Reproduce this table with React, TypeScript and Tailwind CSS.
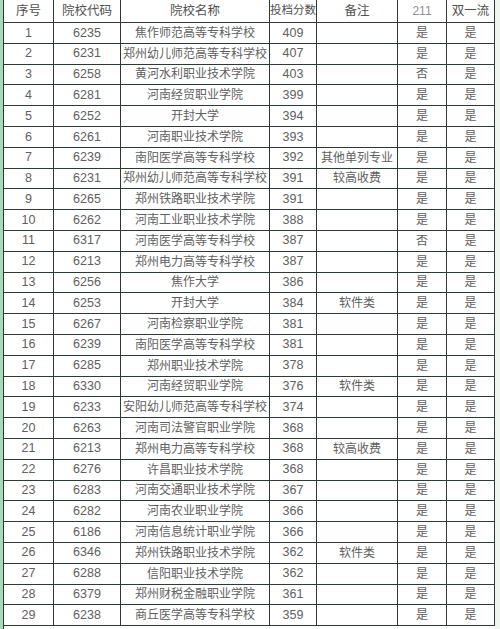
const rows: [string, string, string, string, string, string][] = [
  ["6235", "焦作师范高等专科学校", "409", "", "是", "是"],
  ["6231", "郑州幼儿师范高等专科学校", "407", "", "是", "是"],
  ["6258", "黄河水利职业技术学院", "403", "", "否", "是"],
  ["6281", "河南经贸职业学院", "399", "", "是", "是"],
  ["6252", "开封大学", "394", "", "是", "是"],
  ["6261", "河南职业技术学院", "393", "", "是", "是"],
  ["6239", "南阳医学高等专科学校", "392", "其他单列专业", "是", "是"],
  ["6231", "郑州幼儿师范高等专科学校", "391", "较高收费", "是", "是"],
  ["6265", "郑州铁路职业技术学院", "391", "", "是", "是"],
  ["6262", "河南工业职业技术学院", "388", "", "是", "是"],
  ["6317", "河南医学高等专科学校", "387", "", "否", "是"],
  ["6213", "郑州电力高等专科学校", "387", "", "是", "是"],
  ["6256", "焦作大学", "386", "", "是", "是"],
  ["6253", "开封大学", "384", "软件类", "是", "是"],
  ["6267", "河南检察职业学院", "381", "", "是", "是"],
  ["6239", "南阳医学高等专科学校", "381", "", "是", "是"],
  ["6285", "郑州职业技术学院", "378", "", "是", "是"],
  ["6330", "河南经贸职业学院", "376", "软件类", "是", "是"],
  ["6233", "安阳幼儿师范高等专科学校", "374", "", "是", "是"],
  ["6263", "河南司法警官职业学院", "368", "", "是", "是"],
  ["6213", "郑州电力高等专科学校", "368", "较高收费", "是", "是"],
  ["6276", "许昌职业技术学院", "368", "", "是", "是"],
  ["6283", "河南交通职业技术学院", "367", "", "是", "是"],
  ["6282", "河南农业职业学院", "366", "", "是", "是"],
  ["6186", "河南信息统计职业学院", "366", "", "是", "是"],
  ["6346", "郑州铁路职业技术学院", "362", "软件类", "是", "是"],
  ["6288", "信阳职业技术学院", "362", "", "是", "是"],
  ["6379", "郑州财税金融职业学院", "361", "", "是", "是"],
  ["6238", "商丘医学高等专科学校", "359", "", "是", "是"],
];

const cols = "grid grid-cols-[50px_67px_149px_47px_81px_49px_48px]";
const cell = "flex items-center justify-center border-r border-b border-[#2e3a33] whitespace-nowrap overflow-hidden";

export default function App() {
  return (
    <div className="flex w-[500px] h-[629px] bg-white overflow-hidden text-[#606060] [font-family:'Liberation_Sans','Noto_Sans_CJK_SC',sans-serif]">
      <div className="w-[3px] bg-[#a9d8b2]" />
      <div className="w-[492px] border-l border-[#2e3a33]">
        <div className={`${cols} h-[23px] text-[12.5px] text-[#505050]`}>
          <div className={cell}>序号</div>
          <div className={cell}>院校代码</div>
          <div className={cell}>院校名称</div>
          <div className={`${cell} text-[11.5px]`}>投档分数</div>
          <div className={cell}>备注</div>
          <div className={`${cell} text-[#8a8f96] text-[12px]`}>211</div>
          <div className={cell}>双一流</div>
        </div>
        {rows.map((r, i) => (
          <div key={i} className={`${cols} h-[20.8px] text-[12px]`}>
            <div className={`${cell} text-[12.5px]`}>{i + 1}</div>
            <div className={`${cell} text-[12.5px]`}>{r[0]}</div>
            <div className={cell}>{r[1]}</div>
            <div className={`${cell} text-[12.5px]`}>{r[2]}</div>
            <div className={cell}>{r[3]}</div>
            <div className={cell}>{r[4]}</div>
            <div className={cell}>{r[5]}</div>
          </div>
        ))}
      </div>
      <div className="flex-1 bg-[#eef6ef]" />
    </div>
  );
}
